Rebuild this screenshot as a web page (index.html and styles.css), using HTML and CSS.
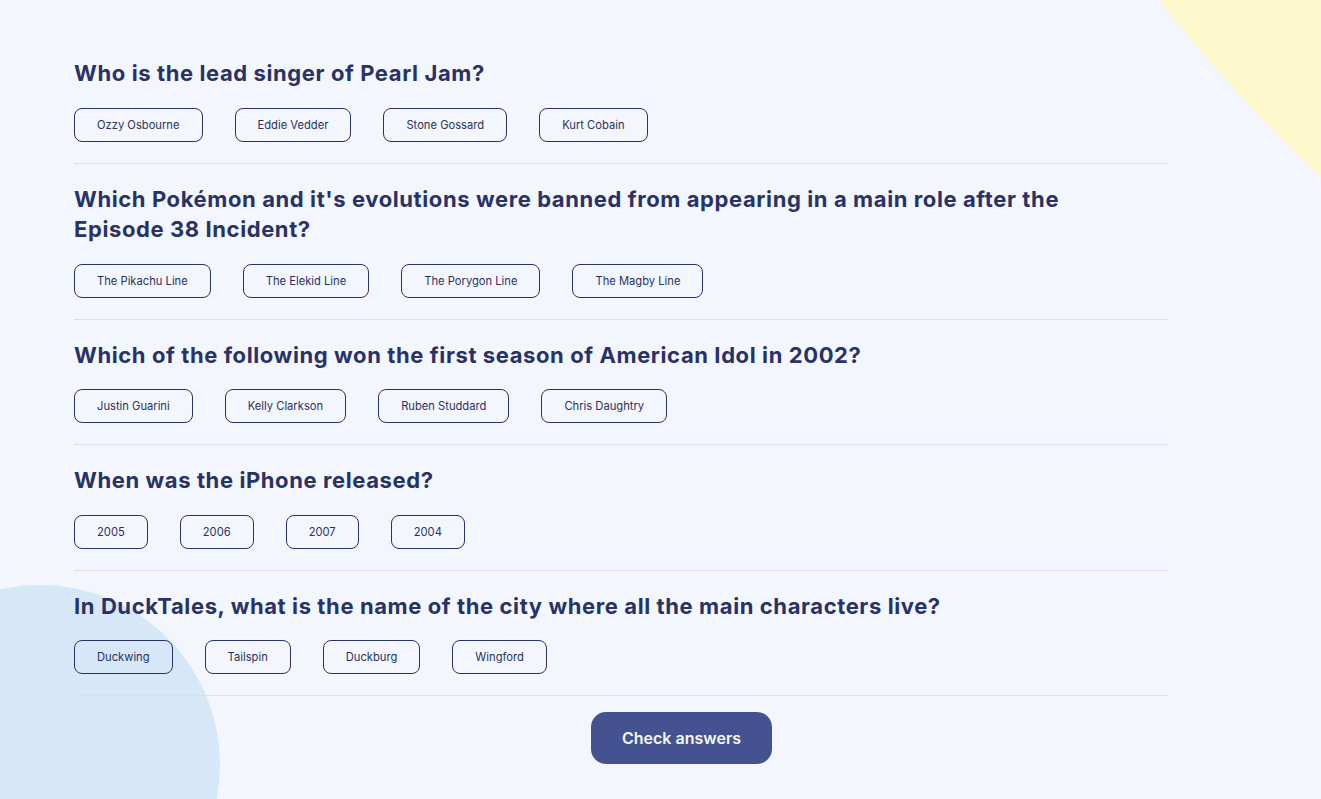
FILE: index.html
```html
<!DOCTYPE html>
<html lang="en">
<head>
<meta charset="utf-8">
<title>Quizzical</title>
<link rel="stylesheet" href="styles.css">
</head>
<body>
<div class="page">
<svg class="blob blob-yellow" width="170" height="190" viewBox="1151 0 170 190" aria-hidden="true">
  <path d="M1160 0 Q1215 75 1321 178 L1321 0 Z" fill="#fef8cd"/>
</svg>
<div class="blob blob-blue" aria-hidden="true"></div>
<main class="quiz">
  <section class="question">
    <h2 class="question-title">Who is the lead singer of Pearl Jam?</h2>
    <div class="answers">
      <button class="answer">Ozzy Osbourne</button>
      <button class="answer">Eddie Vedder</button>
      <button class="answer">Stone Gossard</button>
      <button class="answer">Kurt Cobain</button>
    </div>
  </section>
  <section class="question">
    <h2 class="question-title">Which Pokémon and it's evolutions were banned from appearing in a main role after the Episode 38 Incident?</h2>
    <div class="answers">
      <button class="answer">The Pikachu Line</button>
      <button class="answer">The Elekid Line</button>
      <button class="answer">The Porygon Line</button>
      <button class="answer">The Magby Line</button>
    </div>
  </section>
  <section class="question">
    <h2 class="question-title">Which of the following won the first season of American Idol in 2002?</h2>
    <div class="answers">
      <button class="answer">Justin Guarini</button>
      <button class="answer">Kelly Clarkson</button>
      <button class="answer">Ruben Studdard</button>
      <button class="answer">Chris Daughtry</button>
    </div>
  </section>
  <section class="question">
    <h2 class="question-title">When was the iPhone released?</h2>
    <div class="answers">
      <button class="answer">2005</button>
      <button class="answer">2006</button>
      <button class="answer">2007</button>
      <button class="answer">2004</button>
    </div>
  </section>
  <section class="question">
    <h2 class="question-title">In DuckTales, what is the name of the city where all the main characters live?</h2>
    <div class="answers">
      <button class="answer">Duckwing</button>
      <button class="answer">Tailspin</button>
      <button class="answer">Duckburg</button>
      <button class="answer">Wingford</button>
    </div>
  </section>
  <div class="footer">
    <button class="check">Check answers</button>
  </div>
</main>
</div>
</body>
</html>
```
FILE: styles.css
```css
html, body {
  margin: 0;
  padding: 0;
  overflow: hidden;
}
body {
  background: #f3f6fc;
  font-family: Inter, "Liberation Sans", sans-serif;
  color: #293264;
}
.page {
  position: relative;
  width: 1321px;
  height: 799px;
  overflow: hidden;
}
.blob {
  position: absolute;
  pointer-events: none;
}
.blob-yellow {
  top: 0;
  right: 0;
}
.blob-blue {
  left: -140px;
  top: 585px;
  width: 360px;
  height: 360px;
  border-radius: 50%;
  background: #d6e8f7;
}
.quiz {
  position: relative;
  width: 1094px;
  margin-left: 74px;
  padding-top: 38px;
  display: flex;
  flex-direction: column;
}
.question {
  border-bottom: 1px solid #dbdef0;
  padding-bottom: 21px;
}
.question-title {
  max-width: 1040px;
  margin: 20px 0 19px;
  font-family: Inter, "Liberation Sans", sans-serif;
  font-weight: 700;
  font-size: 22px;
  line-height: 30.5px;
  letter-spacing: 0.6px;
  color: #293264;
}
.answers {
  display: flex;
  gap: 32px;
}
.answer {
  height: 34px;
  padding: 0 22px;
  border: 1px solid #293264;
  border-radius: 8px;
  background: transparent;
  font-family: Inter, "Liberation Sans", sans-serif;
  font-size: 11.2px;
  color: #293264;
}
.footer {
  display: flex;
  padding-top: 16px;
}
.check {
  margin-left: 517px;
  width: 181px;
  height: 52px;
  border: none;
  border-radius: 15px;
  background: #44538f;
  color: #f5f7fb;
  font-family: Inter, "Liberation Sans", sans-serif;
  font-weight: 600;
  font-size: 16px;
}
```
